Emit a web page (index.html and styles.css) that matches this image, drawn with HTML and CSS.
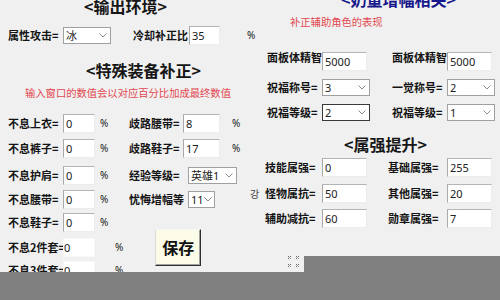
FILE: index.html
```html
<!DOCTYPE html>
<html lang="zh">
<head>
<meta charset="utf-8">
<link rel="stylesheet" href="styles.css">
</head>
<body>
<div class="dialog">
  <section class="col col-left">
    <h2 class="title t-left">&lt;输出环境&gt;</h2>
    <div class="row">
      <span class="lbl w55">属性攻击=</span>
      <div class="sel w48"><span>冰</span><svg class="chev" viewBox="0 0 8 5"><polyline points="0.5,0.5 4,4 7.5,0.5"/></svg></div>
      <span class="lbl ml22 w56">冷却补正比</span>
      <div class="inp w31">35</div>
      <span class="pct ml27">%</span>
    </div>
    <h2 class="title t-left2">&lt;特殊装备补正&gt;</h2>
    <p class="note n-left">输入窗口的数值会以对应百分比加成最终数值</p>
    <div class="row">
      <span class="lbl w55">不息上衣=</span>
      <div class="inp w32">0</div>
      <span class="pct cellp">%</span>
      <span class="lbl w54">歧路腰带=</span>
      <div class="inp w37">8</div>
      <span class="pct ml12">%</span>
    </div>
    <div class="row">
      <span class="lbl w55">不息裤子=</span>
      <div class="inp w32">0</div>
      <span class="pct cellp">%</span>
      <span class="lbl w54">歧路鞋子=</span>
      <div class="inp w37">17</div>
      <span class="pct ml12">%</span>
    </div>
    <div class="row">
      <span class="lbl w55">不息护肩=</span>
      <div class="inp w32">0</div>
      <span class="pct cellp">%</span>
      <span class="lbl w59">经验等级=</span>
      <div class="sel w49"><span>英雄1</span><svg class="chev" viewBox="0 0 8 5"><polyline points="0.5,0.5 4,4 7.5,0.5"/></svg></div>
    </div>
    <div class="row">
      <span class="lbl w55">不息腰带=</span>
      <div class="inp w32">0</div>
      <span class="pct cellp">%</span>
      <span class="lbl w59 clip">忧悔增幅等</span>
      <div class="sel w27"><span>11</span><svg class="chev" viewBox="0 0 8 5"><polyline points="0.5,0.5 4,4 7.5,0.5"/></svg></div>
    </div>
    <div class="row">
      <span class="lbl w55">不息鞋子=</span>
      <div class="inp w32">0</div>
      <span class="pct cellp">%</span>
    </div>
    <div class="row">
      <span class="lbl w55">不息2件套=</span>
      <div class="inp w32 flat">0</div>
      <span class="pct ml20">%</span>
      <button class="btn" type="button">保存</button>
    </div>
    <div class="row">
      <span class="lbl w55">不息3件套=</span>
      <div class="inp w32 flat">0</div>
      <span class="pct ml20">%</span>
    </div>
  </section>

  <section class="col col-right">
    <h2 class="title t-right blue">&lt;奶量增幅相关&gt;</h2>
    <p class="note n-right">补正辅助角色的表现</p>
    <div class="row rrow top">
      <span class="lbl w55">面板体精智</span>
      <div class="inp w45 low">5000</div>
      <span class="lbl ml25 w55">面板体精智</span>
      <div class="inp w45 low">5000</div>
    </div>
    <div class="row rrow">
      <span class="lbl w55">祝福称号=</span>
      <div class="sel w48"><span>3</span><svg class="chev" viewBox="0 0 8 5"><polyline points="0.5,0.5 4,4 7.5,0.5"/></svg></div>
      <span class="lbl ml22 w55">一觉称号=</span>
      <div class="sel w48"><span>2</span><svg class="chev" viewBox="0 0 8 5"><polyline points="0.5,0.5 4,4 7.5,0.5"/></svg></div>
    </div>
    <div class="row rrow">
      <span class="lbl w55">祝福等级=</span>
      <div class="sel w48 focus"><span>2</span><svg class="chev" viewBox="0 0 8 5"><polyline points="0.5,0.5 4,4 7.5,0.5"/></svg></div>
      <span class="lbl ml22 w55">祝福等级=</span>
      <div class="sel w48"><span>1</span><svg class="chev" viewBox="0 0 8 5"><polyline points="0.5,0.5 4,4 7.5,0.5"/></svg></div>
    </div>
    <h2 class="title t-right2">&lt;属强提升&gt;</h2>
    <div class="row srow">
      <span class="lbl w57">技能属强=</span>
      <div class="inp w45">0</div>
      <span class="lbl ml21 w59">基础属强=</span>
      <div class="inp w45">255</div>
    </div>
    <div class="row srow">
      <span class="stray">강</span>
      <span class="lbl w57">怪物属抗=</span>
      <div class="inp w45">50</div>
      <span class="lbl ml21 w59">其他属强=</span>
      <div class="inp w45">20</div>
    </div>
    <div class="row srow">
      <span class="lbl w57">辅助减抗=</span>
      <div class="inp w45">60</div>
      <span class="lbl ml21 w59">勋章属强=</span>
      <div class="inp w45">7</div>
    </div>
  </section>

  <div class="grip">
    <i></i><i></i><i></i><i></i>
  </div>
  <div class="shade shade-left"></div>
  <div class="shade shade-right"></div>
</div>
</body>
</html>
```

FILE: styles.css
```css
html, body {
  margin: 0;
  padding: 0;
}
body {
  width: 500px;
  height: 300px;
  overflow: hidden;
  background: #f0f0f0;
  font-family: "Noto Sans CJK SC", "Noto Sans", sans-serif;
  color: #141414;
}
.dialog {
  position: relative;
  display: grid;
  grid-template-columns: 250px 250px;
  height: 300px;
}
.col {
  display: grid;
  align-content: start;
}
.col-left {
  margin-top: -4px;
  padding-left: 8px;
  grid-template-rows: 29px 35px 23px 30px 25px 27px 24px 23px 25px 23px 20px;
}
.col-right {
  margin-top: -11px;
  grid-template-rows: 23px 37px 28px 25px 32px 23px 26px 25px 20px;
}
.title {
  margin: 0;
  height: 20px;
  line-height: 20px;
  font-size: 16px;
  font-weight: 700;
  white-space: nowrap;
  color: #161616;
}
.t-left { padding-left: 76px; }
.t-left2 { padding-left: 78px; }
.t-right { padding-left: 91px; }
.t-right2 { padding-left: 94px; }
.blue { color: #17178c; }
.note {
  margin: 0;
  height: 20px;
  line-height: 20px;
  font-size: 10.3px;
  color: #e2474f;
  white-space: nowrap;
}
.n-left { padding-left: 17px; }
.n-right { padding-left: 40px; }
.row {
  height: 20px;
  display: flex;
  align-items: center;
  white-space: nowrap;
}
.rrow { padding-left: 17px; }
.srow { padding-left: 15px; }
.lbl {
  flex: none;
  font-size: 11px;
  font-weight: 700;
  line-height: 20px;
  height: 20px;
}
.clip { overflow: hidden; }
.top .lbl { align-self: flex-start; margin-top: -2px; }
.w27 { width: 27px; }
.w31 { width: 31px; }
.w32 { width: 32px; }
.w37 { width: 37px; }
.w45 { width: 45px; }
.w48 { width: 48px; }
.w49 { width: 49px; }
.w54 { width: 54px; }
.w55 { width: 55px; }
.w56 { width: 56px; }
.w57 { width: 57px; }
.w59 { width: 59px; }
.ml12 { margin-left: 12px; }
.ml20 { margin-left: 20px; }
.ml21 { margin-left: 21px; }
.ml22 { margin-left: 22px; }
.ml25 { margin-left: 25px; }
.ml27 { margin-left: 27px; }
.inp {
  flex: none;
  box-sizing: border-box;
  height: 19px;
  background: #fff;
  border: 1px solid #ececec;
  border-left-color: #a9a9a9;
  border-top-color: #b4b4b4;
  font-family: "Noto Sans", sans-serif;
  font-size: 11px;
  line-height: 17px;
  padding-left: 2px;
  color: #222;
}
.inp.flat {
  border-color: #f8f8f8;
  padding-left: 0;
}
.low { margin-top: 4px; }
.sel {
  flex: none;
  box-sizing: border-box;
  height: 17px;
  background: #fff;
  border: 1px solid #a0a0a0;
  display: flex;
  align-items: center;
  justify-content: space-between;
  padding: 0 3px 0 2px;
  font-family: "Noto Sans", "Noto Sans CJK SC", sans-serif;
  font-size: 11px;
  color: #222;
  overflow: hidden;
}
.sel span { line-height: 15px; }
.sel.focus { border-color: #3a3a3a; }
.chev {
  width: 8px;
  height: 5px;
  flex: none;
}
.chev polyline {
  fill: none;
  stroke: #8a8a8a;
  stroke-width: 1;
}
.pct {
  flex: none;
  font-family: "Noto Sans", sans-serif;
  font-size: 10px;
  color: #222;
}
.cellp {
  width: 29px;
  padding-left: 5px;
}
.btn {
  flex: none;
  margin-left: 32px;
  width: 46px;
  height: 37px;
  box-sizing: border-box;
  background: #fbfbe7;
  border: 1px solid;
  border-color: #f6f6f6 #2e2e2e #2e2e2e #dadada;
  box-shadow: inset -1px -1px 0 #a0a0a0;
  font-family: "Noto Sans CJK SC", sans-serif;
  font-size: 16px;
  font-weight: 700;
  color: #111;
  padding: 0;
  display: flex;
  align-items: center;
  justify-content: center;
}
.stray {
  margin-left: -15px;
  width: 15px;
  font-size: 10px;
  color: #444;
  font-family: "Noto Sans CJK KR", sans-serif;
}
.grip {
  position: absolute;
  left: 288px;
  top: 256px;
  width: 11px;
  height: 11px;
  display: grid;
  grid-template-columns: 3px 3px;
  grid-template-rows: 3px 3px;
  gap: 5px;
}
.grip i {
  display: block;
  background:
    linear-gradient(#6e6e6e, #6e6e6e) 0 0 / 1px 1px no-repeat,
    linear-gradient(#6e6e6e, #6e6e6e) 2px 0 / 1px 1px no-repeat,
    linear-gradient(#9a9a9a, #9a9a9a) 1px 1px / 1px 1px no-repeat,
    linear-gradient(#6e6e6e, #6e6e6e) 0 2px / 1px 1px no-repeat,
    linear-gradient(#b0b0b0, #b0b0b0) 2px 2px / 1px 1px no-repeat;
}
.shade {
  position: absolute;
  background: #808080;
  bottom: 0;
}
.shade-left {
  left: 0;
  width: 304px;
  top: 272px;
}
.shade-right {
  left: 304px;
  right: 0;
  top: 256px;
}
```
